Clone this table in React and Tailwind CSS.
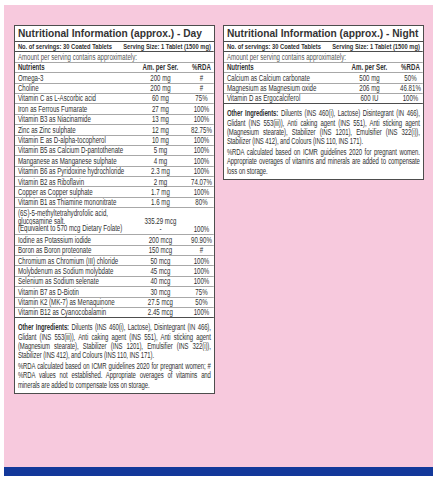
import React from 'react';

const dayRows = [
  ['Omega-3', '200 mg', '#'],
  ['Choline', '200 mg', '#'],
  ['Vitamin C as L-Ascorbic acid', '60 mg', '75%'],
  ['Iron as Ferrous Fumarate', '27 mg', '100%'],
  ['Vitamin B3 as Niacinamide', '13 mg', '100%'],
  ['Zinc as Zinc sulphate', '12 mg', '82.75%'],
  ['Vitamin E as D-alpha-tocopherol', '10 mg', '100%'],
  ['Vitamin B5 as Calcium D-pantothenate', '5 mg', '100%'],
  ['Manganese as Manganese sulphate', '4 mg', '100%'],
  ['Vitamin B6 as Pyridoxine hydrochloride', '2.3 mg', '100%'],
  ['Vitamin B2 as Riboflavin', '2 mg', '74.07%'],
  ['Copper as Copper sulphate', '1.7 mg', '100%'],
  ['Vitamin B1 as Thiamine mononitrate', '1.6 mg', '80%'],
];

const dayRows2 = [
  ['Iodine as Potassium iodide', '200 mcg', '90.90%'],
  ['Boron as Boron proteonate', '150 mcg', '#'],
  ['Chromium as Chromium (III) chloride', '50 mcg', '100%'],
  ['Molybdenum as Sodium molybdate', '45 mcg', '100%'],
  ['Selenium as Sodium selenate', '40 mcg', '100%'],
  ['Vitamin B7 as D-Biotin', '30 mcg', '75%'],
  ['Vitamin K2 (MK-7) as Menaquinone', '27.5 mcg', '50%'],
  ['Vitamin B12 as Cyanocobalamin', '2.45 mcg', '100%'],
];

const nightRows = [
  ['Calcium as Calcium carbonate', '500 mg', '50%'],
  ['Magnesium as Magnesium oxide', '206 mg', '46.81%'],
  ['Vitamin D as Ergocalciferol', '600 IU', '100%'],
];

function Row({ name, amount, rda, header }) {
  return (
    <div className={`flex items-center h-[10.4px] border-b border-[#a8a8a8] pl-[4px] ${header ? 'font-bold' : ''}`}>
      <span className="flex-1 whitespace-nowrap">{name}</span>
      <span className="w-[80px] text-center whitespace-nowrap">{amount}</span>
      <span className="w-[34px] text-center whitespace-nowrap">{rda}</span>
    </div>
  );
}

function Panel({ title, rows, extra, ingredients, note }) {
  return (
    <div className="w-[201px] bg-white border border-[#4d4d4d] font-['Liberation_Sans',Arial,sans-serif] text-[#2f2f2f]">
      <div className="h-[16px] flex items-center pl-[3px] border-b border-[#4d4d4d] font-bold text-[10.2px] text-[#333]">
        {title}
      </div>
      {/* the label uses a condensed face; squeeze the body horizontally */}
      <div className="w-[199px] overflow-hidden">
        <div className="w-[276px] origin-top-left scale-x-[0.72] text-[8.5px] leading-[10.4px]">
          <div className="flex justify-between items-center h-[10.4px] px-[4px] border-b border-[#4d4d4d] font-bold text-[8px]">
            <span>No. of servings: 30 Coated Tablets</span>
            <span>Serving Size: 1 Tablet (1500 mg)</span>
          </div>
          <div className="h-[10.4px] pl-[4px] border-b border-[#a8a8a8] text-[#555]">
            Amount per serving contains approximately:
          </div>
          <Row name="Nutrients" amount="Am. per Ser." rda="%RDA" header />
          {rows.map((r) => (
            <Row key={r[0]} name={r[0]} amount={r[1]} rda={r[2]} />
          ))}
          {extra}
          <div className="border-t border-[#4d4d4d] -mt-px px-[4px] pt-[5px] pb-[3px] leading-[9.3px] text-[8.3px] tracking-[-0.12px] text-justify">
            <p className="mb-[1.5px]">
              <span className="font-bold">Other Ingredients:</span> {ingredients}
            </p>
            <p>{note}</p>
          </div>
        </div>
      </div>
    </div>
  );
}

export default function App() {
  const folate = (
    <>
      <div className="flex h-[27px] border-b border-[#a8a8a8] pl-[4px] leading-[7.6px] pt-[2px] pb-[1px]">
        <span className="flex-1 whitespace-nowrap">
          (6S)-5-methyltetrahydrofolic acid,
          <br />
          glucosamine salt.
          <br />
          (Equivalent to 570 mcg Dietary Folate)
        </span>
        <span className="w-[80px] text-center flex flex-col justify-end">
          <span>335.29 mcg</span>
          <span>-</span>
        </span>
        <span className="w-[34px] text-center flex flex-col justify-end">100%</span>
      </div>
      {dayRows2.map((r) => (
        <Row key={r[0]} name={r[0]} amount={r[1]} rda={r[2]} />
      ))}
    </>
  );

  return (
    <div className="w-[438px] h-[480px] bg-white pt-[5px] pl-[4px] pr-[5px]">
      <div className="h-[462px] bg-[#f7c9dd] flex items-start gap-[8px] pl-[10px] pt-[20px]">
        <Panel
          title="Nutritional Information (approx.) - Day"
          rows={dayRows}
          extra={folate}
          ingredients="Diluents (INS 460(i), Lactose), Disintegrant (IN 466), Glidant (INS 553(iii)), Anti caking agent (INS 551), Anti sticking agent (Magnesium stearate), Stabilizer (INS 1201), Emulsifier (INS 322(i)), Stabilizer (INS 412), and Colours (INS 110, INS 171)."
          note="%RDA calculated based on ICMR guidelines 2020 for pregnant women; # %RDA values not established. Appropriate overages of vitamins and minerals are added to compensate loss on storage."
        />
        <Panel
          title="Nutritional Information (approx.) - Night"
          rows={nightRows}
          ingredients="Diluents (INS 460(i), Lactose) Disintegrant (IN 466), Glidant (INS 553(iii)), Anti caking agent (INS 551), Anti sticking agent (Magnesium stearate), Stabilizer (INS 1201), Emulsifier (INS 322(i)), Stabilizer (INS 412), and Colours (INS 110, INS 171)."
          note="%RDA calculated based on ICMR guidelines 2020 for pregnant women. Appropriate overages of vitamins and minerals are added to compensate loss on storage."
        />
      </div>
      <div className="h-[9px] bg-[#13389a]" />
    </div>
  );
}
